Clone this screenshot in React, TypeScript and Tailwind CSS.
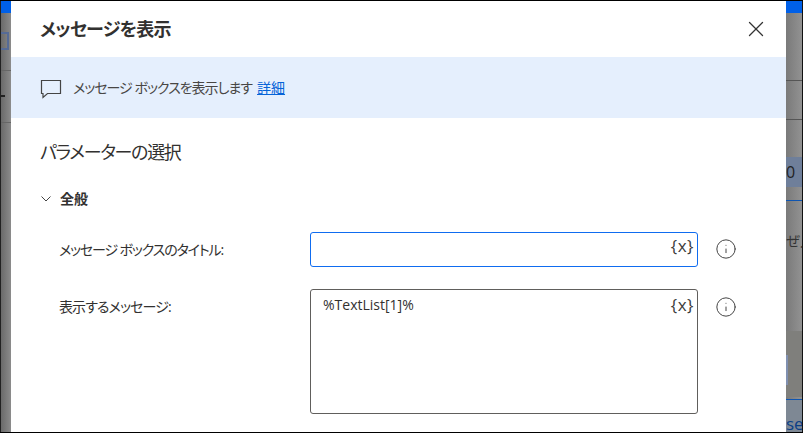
import { Info, X } from "lucide-react";

const jpFont = "font-['Open_Sans','Noto_Sans_CJK_JP',sans-serif] [font-feature-settings:'palt']";

function VarToken({ top }: { top: string }) {
  return (
    <span className={`absolute right-[3px] ${top} text-[17px] leading-[20px] tracking-[0.5px] text-[#3b3b3b]`}>{"{x}"}</span>
  );
}

function InfoIcon() {
  return <Info size={22} strokeWidth={1} className="text-[#333]" />;
}

export default function App() {
  return (
    <div className={`${jpFont} flex h-[433px] w-[803px] overflow-hidden border-y border-black bg-[#8a8a8a]`}>
      {/* dimmed window behind the dialog */}
      <div className="flex w-[11px] shrink-0 flex-col border-l border-[#222] bg-gradient-to-r from-[#6a6a6a] to-[#8c8c8c]">
        <div className="h-[12px] shrink-0 bg-[#0060e8]" />
        <div className="mt-[19px] h-[18px] w-[8px] shrink-0 border-2 border-l-0 border-[#566b96]" />
        <div className="mt-[20px] h-px shrink-0 bg-[#666]" />
        <div className="mt-[24px] h-[2px] w-[4px] shrink-0 bg-[#222]" />
        <div className="mt-[25px] h-px shrink-0 bg-[#666]" />
      </div>

      <div className="flex min-w-0 flex-1 flex-col bg-white">
        <div className="flex h-[56px] shrink-0 items-center justify-between pl-[29px] pr-[17px]">
          <h1 className="text-[18px] font-semibold leading-[24px] tracking-[-0.7px] text-[#323130]">メッセージを表示</h1>
          <X size={26} strokeWidth={1.2} className="text-[#333]" />
        </div>

        <div className="flex h-[61px] shrink-0 items-center bg-[#e5effd] pl-[29px]">
          <svg width="22" height="22" viewBox="0 0 22 22" fill="none" stroke="#444" strokeWidth="1.2">
            <path d="M1.5 3.5h19v13H7.5l-4.5 4v-4H1.5z" />
          </svg>
          <span className="ml-[11px] text-[14px] tracking-[-1px] text-[#484644]">メッセージ ボックスを表示します</span>
          <a className="ml-[5px] text-[14px] text-[#0563d8] underline">詳細</a>
        </div>

        <div className="flex flex-1 flex-col pl-[29px]">
          <h2 className="mt-[22px] text-[18px] leading-[24px] tracking-[-1.3px] text-[#323130]">パラメーターの選択</h2>

          <div className="mt-[25px] flex items-center">
            <svg width="12" height="8" viewBox="0 0 12 8" fill="none" stroke="#444" strokeWidth="1">
              <path d="M1.5 1.5 6 6l4.5-4.5" />
            </svg>
            <span className="ml-[8px] text-[14px] font-semibold leading-[20px] text-[#323130]">全般</span>
          </div>

          <div className="mt-[23px] flex items-start">
            <label className="w-[270px] pl-[19px] pt-[8px] text-[14px] leading-[20px] tracking-[-1.15px] text-[#323130]">
              メッセージ ボックスのタイトル:
            </label>
            <div className="relative h-[35px] w-[388px] rounded-[3px] border border-[#0f6cf0] bg-white">
              <VarToken top="top-[3px]" />
            </div>
            <div className="ml-[17px] mt-[6px]">
              <InfoIcon />
            </div>
          </div>

          <div className="mt-[22px] flex items-start">
            <label className="w-[270px] pl-[19px] pt-[8px] text-[14px] leading-[20px] tracking-[-0.9px] text-[#323130]">
              表示するメッセージ:
            </label>
            <div className="relative h-[125px] w-[388px] rounded-[3px] border border-[#605e5c] bg-white pl-[12px] pt-[5px] text-[14px] leading-[20px] text-[#323130]">
              %TextList[1]%
              <VarToken top="top-[5px]" />
            </div>
            <div className="ml-[17px] mt-[7px]">
              <InfoIcon />
            </div>
          </div>
        </div>
      </div>

      {/* dimmed window on the right */}
      <div className="flex w-[17px] shrink-0 flex-col overflow-hidden border-r border-[#111] bg-gradient-to-r from-[#7a7a7a] to-[#929292] text-[14px] leading-[20px]">
        <div className="h-[12px] shrink-0 bg-[#0060e8]" />
        <div className="mt-[67px] h-px shrink-0 bg-[#555]" />
        <div className="mt-[38px] h-px shrink-0 bg-[#555]" />
        <div className="mt-[37px] flex h-[30px] shrink-0 items-center bg-[#6f7f9a] text-[16px] text-[#222]">0</div>
        <div className="mt-[13px] h-px shrink-0 bg-[#0f55b0]" />
        <div className="mt-[30px] h-[20px] shrink-0 whitespace-nowrap text-[#333]">ぜ入</div>
        <div className="mt-[80px] h-[66px] shrink-0 bg-[#7f7f7c] pt-[24px]">
          <div className="h-[30px] w-[2px] bg-[#8090b0]" />
        </div>
        <div className="mt-[2px] h-px shrink-0 bg-[#0f55b0]" />
        <div className="h-[32px] shrink-0 bg-[#7e8894] pt-[14px] text-[17px] leading-[20px] text-[#0a3f86]">sec</div>
      </div>
    </div>
  );
}
